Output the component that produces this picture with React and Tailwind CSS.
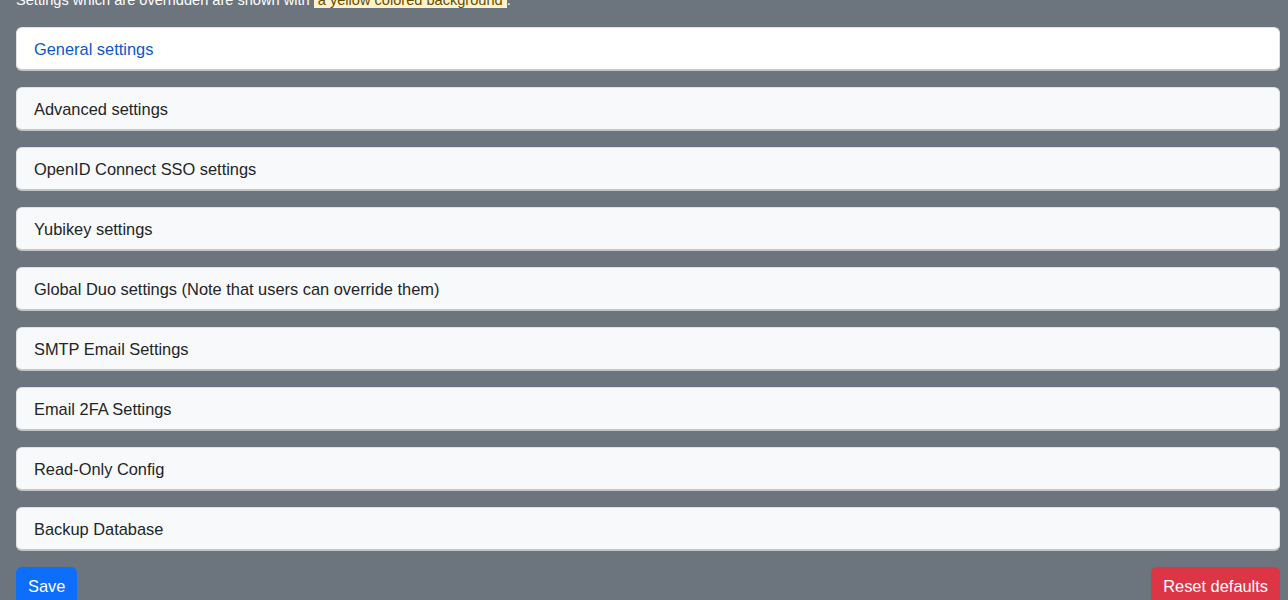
import React from 'react'

const sections = [
  'General settings',
  'Advanced settings',
  'OpenID Connect SSO settings',
  'Yubikey settings',
  'Global Duo settings (Note that users can override them)',
  'SMTP Email Settings',
  'Email 2FA Settings',
  'Read-Only Config',
  'Backup Database',
]

export default function App() {
  return (
    <div
      className="min-h-[600px] bg-[#6c757d] pl-4 pr-2 overflow-hidden"
      style={{ fontFamily: '"Liberation Sans", Arial, sans-serif' }}
    >
      {/* intro line, scrolled partly out of view */}
      <div className="-mt-[12px] mb-[15px] text-[14.6px] leading-[24px] text-white">
        Settings which are overridden are shown with{' '}
        <span className="bg-[#fff3cd] text-[#664d03] px-1">a yellow colored background</span>.
      </div>

      <div className="flex flex-col gap-4">
        {sections.map((name, i) => (
          <div
            key={name}
            className={
              'rounded-[6px] border border-[#dee2e6] border-b-2 border-b-[#c4c7ca] h-[44px] flex items-center pt-[2px] px-[17px] text-[16.4px] ' +
              (i === 0 ? 'bg-white text-[#0a58ca]' : 'bg-[#f8f9fa] text-[#212529]')
            }
          >
            {name}
          </div>
        ))}
      </div>

      <div className="flex justify-between mt-4">
        <button className="bg-[#0d6efd] text-white text-[16.4px] rounded-[6px] px-3 h-[38px] leading-[38px]">
          Save
        </button>
        <button className="bg-[#dc3545] text-white text-[16.4px] rounded-[6px] px-3 h-[38px] leading-[38px]">
          Reset defaults
        </button>
      </div>
    </div>
  )
}
